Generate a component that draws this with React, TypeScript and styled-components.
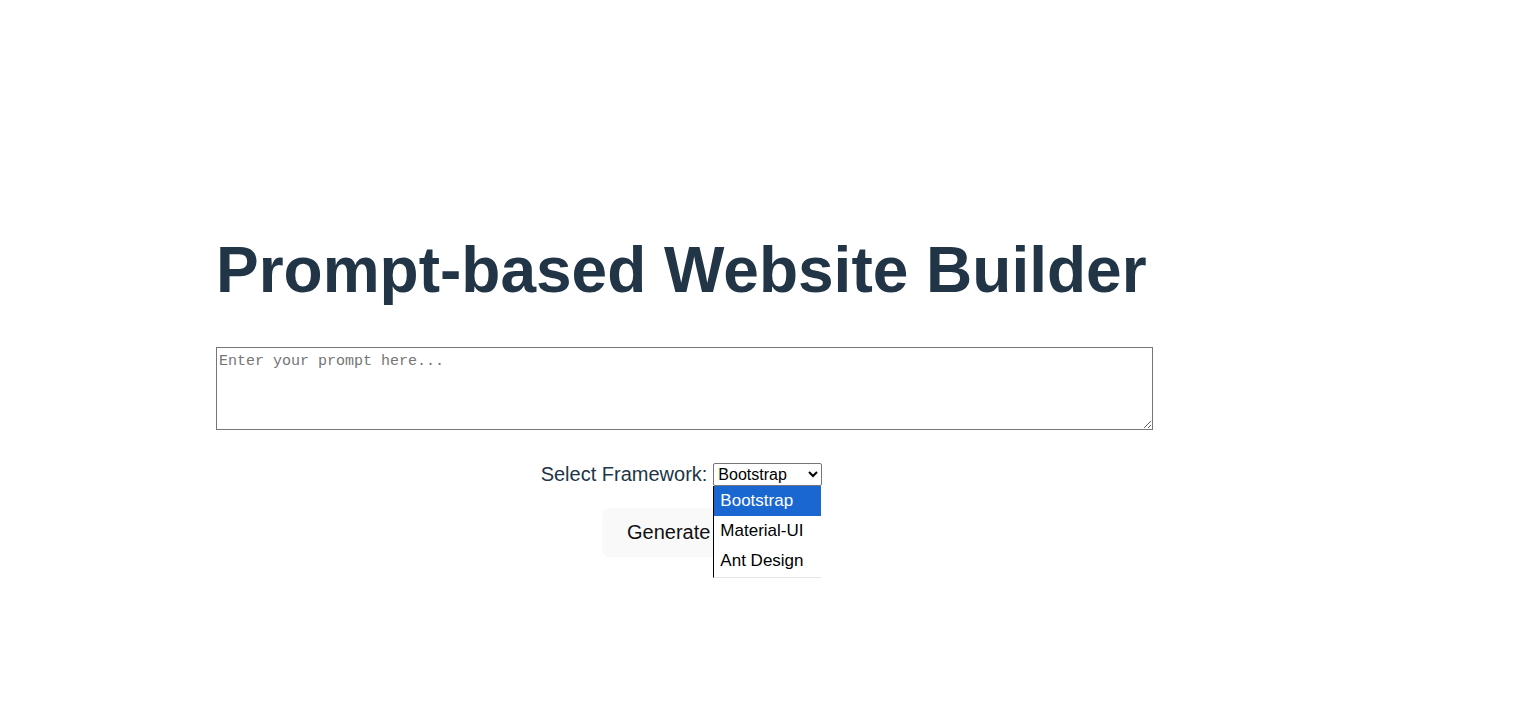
import React, { useState } from 'react';
import styled, { createGlobalStyle } from 'styled-components';

const frameworks = ['Bootstrap', 'Material-UI', 'Ant Design'];

const App = () => {
  const [prompt, setPrompt] = useState('');
  const [framework, setFramework] = useState(frameworks[0]);

  return (
    <>
      <GlobalStyle />
      <Page>
        <Main>
          <Title>Prompt-based Website Builder</Title>
          <PromptInput
            placeholder="Enter your prompt here..."
            value={prompt}
            onChange={(e) => setPrompt(e.target.value)}
          />
          <Controls>
            <FieldRow>
              <Label htmlFor="framework">Select Framework:</Label>
              <SelectWrap>
                <Select
                  id="framework"
                  value={framework}
                  onChange={(e) => setFramework(e.target.value)}
                >
                  {frameworks.map((f) => (
                    <option key={f} value={f}>
                      {f}
                    </option>
                  ))}
                </Select>
                <Popup>
                  {frameworks.map((f) => (
                    <Option key={f} $active={f === framework} onClick={() => setFramework(f)}>
                      {f}
                    </Option>
                  ))}
                </Popup>
              </SelectWrap>
            </FieldRow>
            <GenerateButton>Generate UI</GenerateButton>
          </Controls>
        </Main>
      </Page>
    </>
  );
};

export default App;

const GlobalStyle = createGlobalStyle`
  body {
    margin: 0;
    background: #ffffff;
    color: #213547;
    font-family: "Liberation Sans", Arial, sans-serif;
  }
`;

const Page = styled.div`
  display: flex;
  min-height: 100vh;
  box-sizing: border-box;
  padding: 235px 0 0 216px;
`;

const Main = styled.div`
  display: flex;
  flex-direction: column;
  width: 931px;
`;

const Title = styled.h1`
  margin: 0 0 42px;
  font-size: 64px;
  line-height: 70px;
  font-weight: 700;
  color: #213547;
  white-space: nowrap;
`;

const PromptInput = styled.textarea`
  width: 100%;
  height: 74px;
  box-sizing: content-box;
  padding: 5px 2px 2px;
  border: 1px solid #767676;
  border-radius: 0;
  font-family: "Liberation Mono", "DejaVu Sans Mono", monospace;
  font-size: 15px;
  color: #000;
  outline: none;

  &::placeholder {
    color: #757575;
  }
`;

const Controls = styled.div`
  display: flex;
  flex-direction: column;
  align-items: center;
  margin-top: 33px;
  gap: 22px;
`;

const FieldRow = styled.div`
  display: flex;
  align-items: center;
  gap: 6px;
  height: 23px;
  font-size: 20px;
`;

const Label = styled.label`
  color: #213547;
  line-height: 23px;
`;

const SelectWrap = styled.div`
  position: relative;
  display: flex;
`;

const Select = styled.select`
  width: 109px;
  height: 23px;
  font-family: "Liberation Sans", Arial, sans-serif;
  font-size: 16px;
  color: #000;
  background: #fff;
  border: 1px solid #767676;
  border-radius: 2px;
`;

const Popup = styled.div`
  position: absolute;
  top: 100%;
  left: 0;
  z-index: 10;
  width: 107px;
  height: 91px;
  overflow: hidden;
  background: #ffffff;
  border-left: 1px solid #000;
  border-bottom: 1px solid #e3e3e3;
`;

const Option = styled.div<{ $active: boolean }>`
  height: 30px;
  line-height: 30px;
  padding-left: 6px;
  font-size: 17px;
  white-space: nowrap;
  color: ${(p) => (p.$active ? '#ffffff' : '#000000')};
  background: ${(p) => (p.$active ? '#1a67d2' : 'transparent')};
  cursor: default;
`;

const GenerateButton = styled.button`
  padding: 12px 24px;
  border: 1px solid transparent;
  border-radius: 8px;
  background: #f9f9f9;
  font-family: inherit;
  font-size: 20px;
  line-height: normal;
  color: #111;
  cursor: pointer;
`;
